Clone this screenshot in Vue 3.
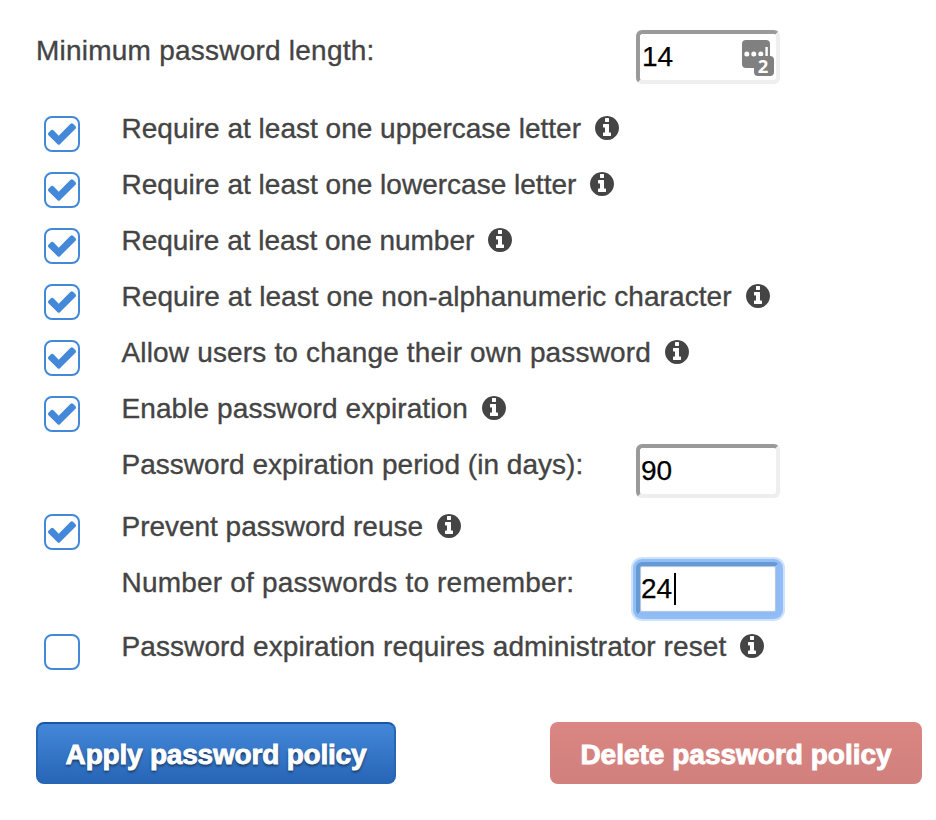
<script setup>
import { ref } from 'vue'

const rows = ref([
  { id: 'upper', label: 'Require at least one uppercase letter', checked: true, info: true },
  { id: 'lower', label: 'Require at least one lowercase letter', checked: true, info: true },
  { id: 'number', label: 'Require at least one number', checked: true, info: true },
  { id: 'symbol', label: 'Require at least one non-alphanumeric character', checked: true, info: true },
  { id: 'change', label: 'Allow users to change their own password', checked: true, info: true },
  { id: 'expire', label: 'Enable password expiration', checked: true, info: true },
  { id: 'period', label: 'Password expiration period (in days):', value: '90' },
  { id: 'reuse', label: 'Prevent password reuse', checked: true, info: true },
  { id: 'remember', label: 'Number of passwords to remember:', value: '24', focused: true },
  { id: 'reset', label: 'Password expiration requires administrator reset', checked: false, info: true },
])
const toggle = (row) => { row.checked = !row.checked }
</script>

<template>
  <main class="policy">
    <div class="row minimum">
      <span class="label">Minimum password length:</span>
      <div class="field">
        <span class="value">14</span>
        <div class="manager">
          <svg class="manager-icon" viewBox="0 0 32 36">
            <rect x="0" y="0" width="28" height="28" rx="4" fill="#808080" />
            <circle cx="4.8" cy="14" r="2.5" fill="#fff" />
            <circle cx="11.8" cy="14" r="2.5" fill="#fff" />
            <circle cx="18.8" cy="14" r="2.5" fill="#fff" />
            <rect x="23.4" y="7" width="2.4" height="9" fill="#fff" />
            <rect x="12" y="16" width="20" height="20" rx="4" fill="#808080" />
          </svg>
          <span class="count">2</span>
        </div>
      </div>
    </div>

    <div v-for="row in rows" :key="row.id" class="row option" :class="row.id">
      <div class="toggle">
        <span v-if="'checked' in row" class="box" role="checkbox" :aria-checked="row.checked" @click="toggle(row)">
          <svg v-if="row.checked" class="check" viewBox="121 334 1550 1188">
            <path d="M1671 566q0 40-28 68l-724 724-136 136q-28 28-68 28t-68-28l-136-136-362-362q-28-28-28-68t28-68l136-136q28-28 68-28t68 28l294 295 656-657q28-28 68-28t68 28l136 136q28 28 28 68z" />
          </svg>
        </span>
      </div>
      <span class="label">{{ row.label }}</span>
      <svg v-if="row.info" class="info" viewBox="0 128 1536 1536">
        <path d="M1024 1376v-160q0-14-9-23t-23-9h-96v-512q0-14-9-23t-23-9h-320q-14 0-23 9t-9 23v160q0 14 9 23t23 9h96v320h-96q-14 0-23 9t-9 23v160q0 14 9 23t23 9h448q14 0 23-9t9-23zm-128-896v-192q0-14-9-23t-23-9h-192q-14 0-23 9t-9 23v192q0 14 9 23t23 9h192q14 0 23-9t9-23zm640 416q0 209-103 385.5t-279.5 279.5-385.5 103-385.5-103-279.5-279.5-103-385.5 103-385.5 279.5-279.5 385.5-103 385.5 103 279.5 279.5 103 385.5z" />
      </svg>
      <div v-if="row.value" class="field" :class="{ focused: row.focused }">
        <span class="value">{{ row.value }}</span>
        <span v-if="row.focused" class="caret"></span>
      </div>
    </div>

    <div class="actions">
      <button class="button apply">Apply password policy</button>
      <button class="button delete">Delete password policy</button>
    </div>
  </main>
</template>

<style>
body { margin: 0; background: #fff; }
</style>

<style scoped>
.policy {
  box-sizing: border-box;
  width: 936px;
  height: 820px;
  padding: 22px 14px 0 36px;
  font-family: "Liberation Sans", Arial, sans-serif;
  font-size: 28px;
  color: #444;
  overflow: hidden;
}
.row { display: flex; align-items: flex-start; height: 56px; width: 744px; }
.minimum { height: 78px; }
.period { height: 62px; }
.remember { height: 64px; }
.label { line-height: 58px; white-space: nowrap; -webkit-text-stroke: 0.35px #444; }
.minimum .label { letter-spacing: 0.23px; }
.upper .label, .lower .label { letter-spacing: 0.01px; }
.number .label { letter-spacing: -0.02px; }
.symbol .label { letter-spacing: 0.065px; }
.change .label { letter-spacing: 0.165px; }
.expire .label { letter-spacing: 0.09px; }
.period .label { letter-spacing: 0.03px; }
.reuse .label { letter-spacing: -0.02px; }
.remember .label { letter-spacing: 0.19px; }
.reset .label { letter-spacing: 0.085px; }
.toggle { width: 85.5px; height: 56px; flex: none; box-sizing: border-box; padding: 16px 0 0 8px; }
.box {
  box-sizing: border-box;
  display: flex;
  align-items: center;
  justify-content: center;
  width: 36px;
  height: 36px;
  border: 2px solid #4489d9;
  border-radius: 8px;
}
.check { width: 28px; height: 22px; fill: #4489d9; }
.info { width: 24px; height: 24px; margin: 15.5px 0 0 14px; fill: #444; flex: none; }
.field {
  box-sizing: border-box;
  display: flex;
  align-items: center;
  width: 144px;
  height: 54px;
  margin: 8px 0 0 auto;
  border: 4px solid;
  border-color: #9a9a9a #eee #eee #9a9a9a;
  border-radius: 6px;
  background: #fff;
  color: #000;
  flex: none;
}
.value { line-height: 46px; padding-left: 1px; -webkit-text-stroke: 0.25px #000; }
.minimum .value { padding-left: 2px; }
.manager { display: grid; width: 32px; height: 36px; margin: 2px 2px 0 auto; }
.manager-icon { grid-area: 1 / 1; width: 32px; height: 36px; }
.count {
  grid-area: 1 / 1;
  justify-self: end;
  align-self: end;
  width: 22px;
  margin-bottom: -3px;
  text-align: center;
  font: bold 18.5px/26px "Open Sans", sans-serif;
  color: #fff;
}
.focused {
  border-color: #6799d3 #91bcf3 #91bcf3 #6799d3;
  box-shadow: 0 0 0 3px #91bef7, 0 0 0 5px #cfe2fb, inset 0 0 1px 1px #aac4e2;
}
.caret { width: 2px; height: 32px; background: #000; margin-left: 2px; }
.actions { display: flex; justify-content: space-between; margin-top: 48px; }
.button {
  box-sizing: border-box;
  height: 62px;
  padding: 3px 0 0;
  border-radius: 8px;
  font: bold 28px/56px "Liberation Sans", Arial, sans-serif;
  color: #fff;
  -webkit-text-stroke: 0.9px #fff;
  white-space: nowrap;
}
.apply {
  width: 360px;
  border: 2px solid #2765b5;
  border-top-color: #1a56a8;
  background: linear-gradient(#4488da, #2765b5);
  background-origin: border-box;
  letter-spacing: -0.2px;
  text-shadow: 0 2px 3px rgba(0, 0, 0, 0.6);
}
.delete {
  width: 372px;
  border: 0;
  background: linear-gradient(#db8683, #d0807d);
}
</style>
